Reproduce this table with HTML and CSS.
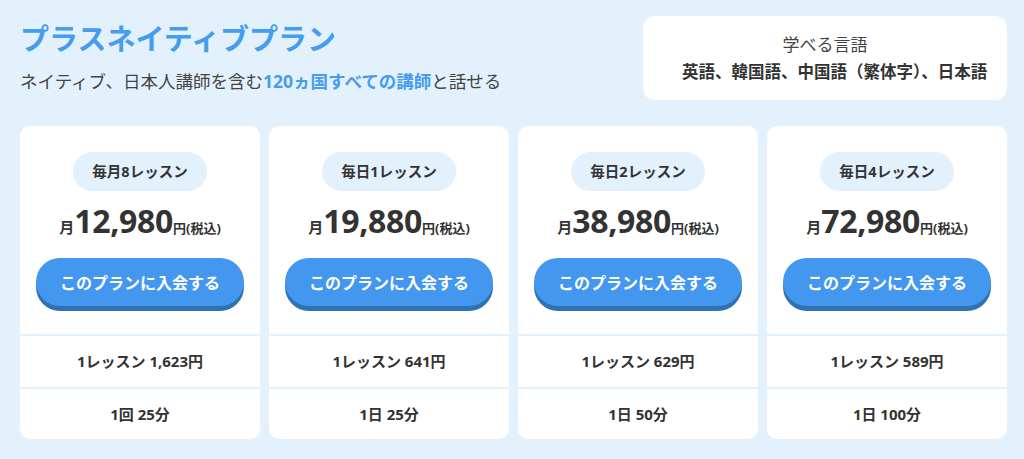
FILE: index.html
```html
<!DOCTYPE html>
<html lang="ja">
<head>
  <meta charset="UTF-8" />
  <meta name="viewport" content="width=device-width, initial-scale=1.0" />
  <title>プラスネイティブプラン</title>
  <link rel="stylesheet" href="styles.css">
</head>
<body>
  <div class="pagina">
    <div class="topo">
      <div class="intro">
        <h1 class="titulo">プラスネイティブプラン</h1>
        <p class="sub">ネイティブ、日本人講師を含む<strong>120ヵ国すべての講師</strong>と話せる</p>
      </div>
      <div class="idiomas">
        <div class="idiomas-label">学べる言語</div>
        <div class="idiomas-lista">英語、韓国語、中国語（繁体字）、日本語</div>
      </div>
    </div>

    <div class="planos">
      <div class="plano">
        <div class="plano-topo">
          <div class="pill">毎月8レッスン</div>
          <div class="preco"><span class="mes">月</span><span class="valor">12,980</span><span class="yen">円(税込)</span></div>
          <button class="btn">このプランに入会する</button>
        </div>
        <div class="linha">1レッスン 1,623円</div>
        <div class="linha">1回 25分</div>
      </div>

      <div class="plano">
        <div class="plano-topo">
          <div class="pill">毎日1レッスン</div>
          <div class="preco"><span class="mes">月</span><span class="valor">19,880</span><span class="yen">円(税込)</span></div>
          <button class="btn">このプランに入会する</button>
        </div>
        <div class="linha">1レッスン 641円</div>
        <div class="linha">1日 25分</div>
      </div>

      <div class="plano">
        <div class="plano-topo">
          <div class="pill">毎日2レッスン</div>
          <div class="preco"><span class="mes">月</span><span class="valor">38,980</span><span class="yen">円(税込)</span></div>
          <button class="btn">このプランに入会する</button>
        </div>
        <div class="linha">1レッスン 629円</div>
        <div class="linha">1日 50分</div>
      </div>

      <div class="plano">
        <div class="plano-topo">
          <div class="pill">毎日4レッスン</div>
          <div class="preco"><span class="mes">月</span><span class="valor">72,980</span><span class="yen">円(税込)</span></div>
          <button class="btn">このプランに入会する</button>
        </div>
        <div class="linha">1レッスン 589円</div>
        <div class="linha">1日 100分</div>
      </div>
    </div>
  </div>
</body>
</html>
```

FILE: styles.css
```css
body {
  font-family: "Noto Sans", "Noto Sans CJK JP", sans-serif;
  background-color: #e3f1fd;
  color: #333;
  margin: 0;
  padding: 0;
}

.pagina {
  padding: 16px 17px 0 20px;
}

.topo {
  display: flex;
  justify-content: space-between;
  align-items: flex-start;
  margin-bottom: 26px;
}

.intro {
  padding-top: 4px;
}

.titulo {
  margin: 0;
  font-size: 29px;
  line-height: 38px;
  font-weight: bold;
  color: #459def;
}

.sub {
  margin: 10px 0 0;
  font-size: 17.5px;
  line-height: 26px;
  color: #444;
}

.sub strong {
  color: #459def;
}

.idiomas {
  width: 364px;
  height: 84px;
  background-color: #fff;
  border-radius: 12px;
  display: flex;
  flex-direction: column;
  justify-content: center;
  align-items: center;
  text-align: center;
}

.idiomas-label {
  font-size: 17px;
  line-height: 27px;
  color: #444;
}

.idiomas-lista {
  font-size: 16.5px;
  line-height: 27px;
  font-weight: bold;
  padding-left: 19px;
}

.planos {
  display: grid;
  grid-template-columns: repeat(4, 1fr);
  gap: 9px;
}

.plano {
  background-color: #fff;
  border-radius: 10px;
  overflow: hidden;
  text-align: center;
}

.plano-topo {
  padding: 26px 16px 28px;
}

.pill {
  display: inline-block;
  background-color: #e3f1fd;
  border-radius: 20px;
  height: 39px;
  line-height: 39px;
  padding: 0 19px;
  font-size: 14.5px;
  font-weight: bold;
}

.preco {
  margin-top: 14px;
  height: 40px;
  line-height: 40px;
  font-weight: bold;
  white-space: nowrap;
}

.preco .mes {
  font-size: 15px;
  line-height: 1;
}

.preco .valor {
  font-size: 32px;
  line-height: 1;
  letter-spacing: -0.3px;
}

.preco .yen {
  font-size: 13px;
  line-height: 1;
}

.btn {
  display: block;
  width: 100%;
  height: 48px;
  margin-top: 13px;
  border: none;
  border-radius: 24px;
  background-color: #4497ee;
  box-shadow: 0 5px 0 #2f72b3;
  color: #fff;
  font-family: inherit;
  font-size: 16px;
  font-weight: bold;
  cursor: pointer;
}

.linha {
  border-top: 2px solid #e3f1fd;
  height: 50px;
  line-height: 50px;
  font-size: 15px;
  font-weight: bold;
}

.linha:nth-child(2) {
  height: 51px;
  line-height: 51px;
}
```
